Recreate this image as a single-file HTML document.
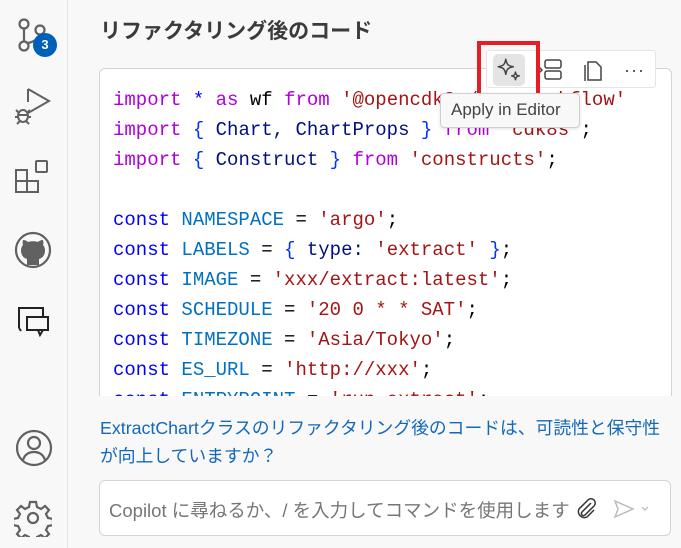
<!DOCTYPE html>
<html><head><meta charset="utf-8"><style>
*{margin:0;padding:0;box-sizing:border-box}
body{width:681px;height:548px;background:#f8f8f8;position:relative;overflow:hidden;font-family:"Liberation Sans","Noto Sans CJK JP",sans-serif}
.side{position:absolute;left:0;top:0;width:68px;height:548px;border-right:1px solid #e5e5e5;background:#f8f8f8}
.side svg{position:absolute}
.title{position:absolute;left:100px;top:15px;font-size:21px;font-weight:bold;color:#3b3b3b}
.code{position:absolute;left:99px;top:68px;width:573px;height:328px;background:#fff;border:1px solid #d4d4d4;border-bottom:none;border-radius:6px 6px 0 0;overflow:hidden}
pre{position:absolute;left:13px;top:16px;font-family:"Liberation Mono",monospace;font-size:19px;line-height:30px;color:#001080;white-space:pre}
.k{color:#af00db}.b{color:#0000ff}.s{color:#a31515}.v{color:#0070c1}.t{color:#000}.p{color:#0431fa}
.tb{position:absolute;left:486px;top:50px;width:170px;height:38px;background:#fff;border:1px solid #e5e5e5;border-radius:3px}
.hl{position:absolute;left:493px;top:54px;width:32px;height:32px;background:#e4e4e4;border-radius:5px}
.red{position:absolute;left:477px;top:41px;width:63px;height:59px;border:4px solid #e81c24}
.tip{position:absolute;left:440px;top:93px;width:140px;height:35px;background:#f8f8f8;border:1px solid #cfcfcf;border-radius:4px;font-size:17px;color:#444;padding:6px 0 0 10px;box-shadow:0 1px 3px rgba(0,0,0,.12);white-space:nowrap}
.q{position:absolute;left:100px;top:414px;font-size:17.8px;line-height:28px;color:#1368b8;width:580px;white-space:nowrap}
.in{position:absolute;left:99px;top:480px;width:572px;height:56px;background:#fff;border:1px solid #d4d4d4;border-radius:6px}
.in span{position:absolute;left:9px;top:16px;font-size:18.5px;color:#767676;white-space:nowrap;width:465px;overflow:hidden}
</style></head><body>
<div class="side">
<svg style="left:14px;top:13px" width="46" height="48" viewBox="0 0 46 48"><g fill="none" stroke="#616161" stroke-width="2.2"><circle cx="10" cy="11" r="4.5"/><circle cx="10" cy="33" r="4.5"/><circle cx="26" cy="17" r="4.5"/><path d="M10 15.5v13M14 30c6-1 11-5 12-8.5"/></g></svg>
<div style="position:absolute;left:33px;top:33px;width:24px;height:24px;border-radius:50%;background:#005fb8;color:#fff;font-size:13px;font-weight:bold;text-align:center;line-height:24px">3</div>
<svg style="left:14px;top:86px" width="40" height="40" viewBox="0 0 40 40"><g fill="none" stroke="#616161" stroke-width="2"><path d="M14 3v13M14 3l21 12-21 12"/><ellipse cx="9" cy="30" rx="5" ry="6"/><path d="M2 24l3 3M16 24l-3 3M1 31h3M14 31h3M3 38l3-3M15 38l-3-3M5 29h8"/></g></svg>
<svg style="left:14px;top:159px" width="38" height="38" viewBox="0 0 38 38"><g fill="none" stroke="#616161" stroke-width="2"><rect x="2" y="11" width="11" height="11"/><rect x="2" y="22" width="11" height="11"/><rect x="13" y="22" width="11" height="11"/><rect x="22" y="2" width="11" height="11" rx="1"/></g></svg>
<svg style="left:14px;top:231px" width="38" height="38" viewBox="0 0 38 38"><circle cx="19" cy="19" r="17" fill="none" stroke="#616161" stroke-width="2.2"/><path d="M13 34v-6c-3-1-6-3-6-9 0-2 1-4 2-5-0.5-1-0.5-3 0-5 2 0 4 1 5 2 3-1 7-1 10 0 1-1 3-2 5-2 0.5 2 0.5 4 0 5 1 1 2 3 2 5 0 6-3 8-6 9v6z" fill="#616161"/></svg>
<svg style="left:16px;top:305px" width="36" height="34" viewBox="0 0 36 34"><g fill="none" stroke="#222" stroke-width="2"><path d="M3 23V3h24v8"/><path d="M3 23l2 3"/><rect x="11" y="12" width="21" height="13"/><path d="M22 25l2 5 3-5"/></g></svg>
<svg style="left:14px;top:428px" width="40" height="40" viewBox="0 0 40 40"><g fill="none" stroke="#616161" stroke-width="2.2"><circle cx="20" cy="20" r="17"/><circle cx="20" cy="15" r="6"/><path d="M9 32c2-6 6-8 11-8s9 2 11 8"/></g></svg>
<svg style="left:14px;top:499px" width="38" height="38" viewBox="0 0 38 38"><g fill="none" stroke="#616161" stroke-width="2.2"><circle cx="19" cy="19" r="5"/><path d="M16 3h6l1 5 4 2 4-3 4 4-3 4 2 4 5 1v6l-5 1-2 4 3 4-4 4-4-3-4 2-1 5h-6l-1-5-4-2-4 3-4-4 3-4-2-4-5-1v-6l5-1 2-4-3-4 4-4 4 3 4-2z"/></g></svg>
</div>
<div class="title">リファクタリング後のコード</div>
<div class="code"><pre><span class="k">import</span> <span class="b">*</span> <span class="k">as</span> <span class="t">wf</span> <span class="k">from</span> <span class="s">'@opencdk8s/argoworkflow'</span>
<span class="k">import</span> <span class="p">{</span> Chart, ChartProps <span class="p">}</span> <span class="k">from</span> <span class="s">'cdk8s'</span><span class="t">;</span>
<span class="k">import</span> <span class="p">{</span> Construct <span class="p">}</span> <span class="k">from</span> <span class="s">'constructs'</span><span class="t">;</span>

<span class="b">const</span> <span class="v">NAMESPACE</span> <span class="t">=</span> <span class="s">'argo'</span><span class="t">;</span>
<span class="b">const</span> <span class="v">LABELS</span> <span class="t">=</span> <span class="p">{</span> type: <span class="s">'extract'</span> <span class="p">}</span><span class="t">;</span>
<span class="b">const</span> <span class="v">IMAGE</span> <span class="t">=</span> <span class="s">'xxx/extract:latest'</span><span class="t">;</span>
<span class="b">const</span> <span class="v">SCHEDULE</span> <span class="t">=</span> <span class="s">'20 0 * * SAT'</span><span class="t">;</span>
<span class="b">const</span> <span class="v">TIMEZONE</span> <span class="t">=</span> <span class="s">'Asia/Tokyo'</span><span class="t">;</span>
<span class="b">const</span> <span class="v">ES_URL</span> <span class="t">=</span> <span class="s">'http://xxx'</span><span class="t">;</span>
<span class="b">const</span> <span class="v">ENTRYPOINT</span> <span class="t">=</span> <span class="s">'run-extract'</span><span class="t">;</span></pre></div>
<div class="tb"></div>
<div class="hl"></div>
<svg style="position:absolute;left:495px;top:56px" width="28" height="28" viewBox="0 0 26 26"><g fill="none" stroke="#444" stroke-width="1.4" stroke-linejoin="round"><path d="M10 3c1 5 2 6 7 7-5 1-6 2-7 7-1-5-2-6-7-7 5-1 6-2 7-7z"/><path d="M19 15c.5 2.5 1 3 3.5 3.5-2.5.5-3 1-3.5 3.5-.5-2.5-1-3-3.5-3.5 2.5-.5 3-1 3.5-3.5z"/></g></svg>
<svg style="position:absolute;left:538px;top:57px" width="28" height="26" viewBox="0 0 28 26"><g fill="none" stroke="#444" stroke-width="1.5"><rect x="7" y="3" width="16" height="8" rx="2"/><rect x="7" y="14" width="16" height="8" rx="2"/><path d="M1 10l3 3-3 3"/></g></svg>
<svg style="position:absolute;left:580px;top:57px" width="24" height="26" viewBox="0 0 24 26"><g fill="none" stroke="#444" stroke-width="1.5"><path d="M8 5h8l5 5v13H8z"/><path d="M5 8v16"/></g></svg>
<div style="position:absolute;left:624px;top:60px;font-size:18px;color:#444;letter-spacing:1px">···</div>
<div class="red"></div>
<div class="tip">Apply in Editor</div>
<div class="q">ExtractChartクラスのリファクタリング後のコードは、可読性と保守性<br>が向上していますか？</div>
<div class="in"><span>Copilot に尋ねるか、/ を入力してコマンドを使用します</span>
<svg style="position:absolute;left:474px;top:16px" width="24" height="24" viewBox="0 0 24 24"><path d="M17 6l-9 9a2 2 0 0 0 3 3l9-9a4 4 0 0 0-6-6l-9 9a6 6 0 0 0 8 8l7-7" fill="none" stroke="#333" stroke-width="1.5"/></svg>
<svg style="position:absolute;left:512px;top:16px" width="40" height="24" viewBox="0 0 40 24"><path d="M3 4l18 8-18 8 3-8z" fill="none" stroke="#bbb" stroke-width="1.5"/><path d="M30 10l3 3 3-3" fill="none" stroke="#bbb" stroke-width="1.2"/></svg>
</div>
</body></html>
